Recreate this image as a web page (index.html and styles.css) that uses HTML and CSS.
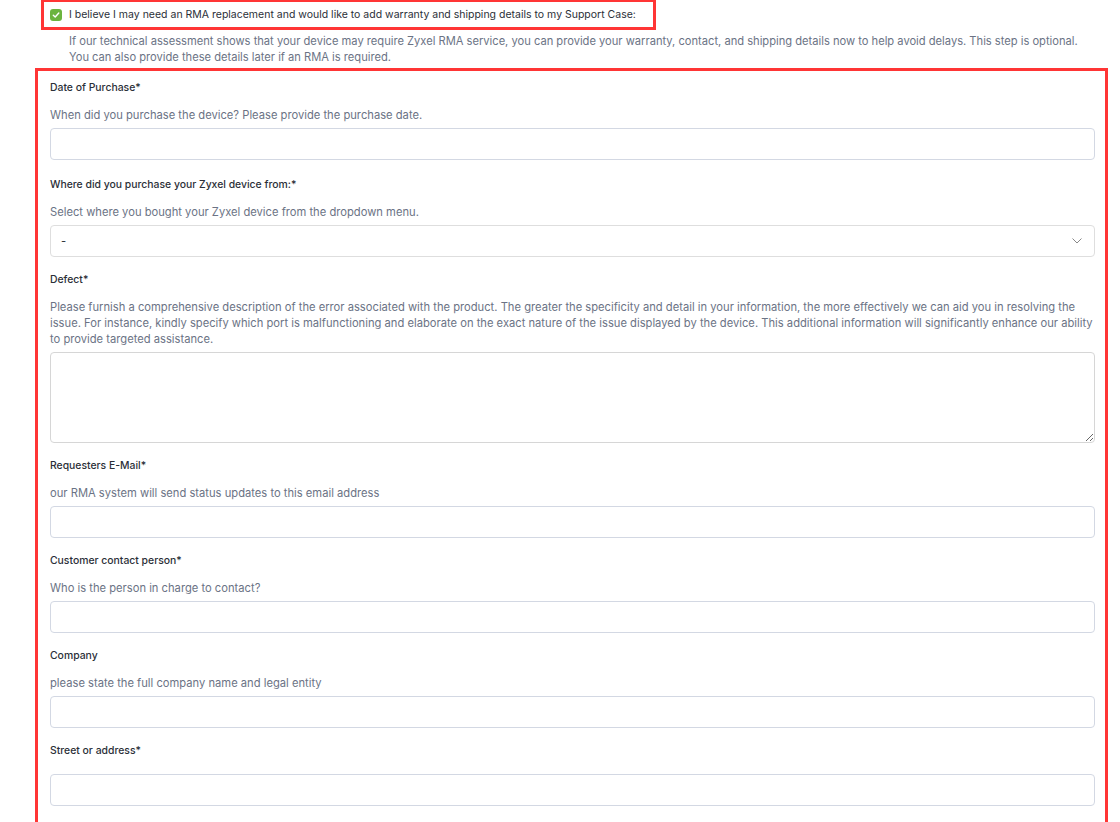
FILE: index.html
```html
<!DOCTYPE html>
<html lang="en">
<head>
    <meta charset="UTF-8">
    <meta name="viewport" content="width=device-width, initial-scale=1.0">
    <title>RMA details</title>
    <link rel="stylesheet" href="styles.css">
</head>
<body>
    <div class="rma-page">
        <label class="rma-opt">
            <span class="check">
                <svg width="8" height="8" viewBox="0 0 8 8"><path d="M1.3 4.2 L3.2 6 L6.8 2" fill="none" stroke="#fff" stroke-width="1.4" stroke-linecap="round" stroke-linejoin="round"/></svg>
            </span>
            I believe I may need an RMA replacement and would like to add warranty and shipping details to my Support Case:
        </label>
        <p class="rma-note">If our technical assessment shows that your device may require Zyxel RMA service, you can provide your warranty, contact, and shipping details now to help avoid delays. This step is optional. You can also provide these details later if an RMA is required.</p>

        <section class="rma-fields">
            <div class="field field-first">
                <label class="field-label" for="purchase-date">Date of Purchase*</label>
                <p class="field-help">When did you purchase the device? Please provide the purchase date.</p>
                <input class="field-input" type="text" id="purchase-date">
            </div>

            <div class="field">
                <label class="field-label" for="bought-from">Where did you purchase your Zyxel device from:*</label>
                <p class="field-help">Select where you bought your Zyxel device from the dropdown menu.</p>
                <div class="select-wrap">
                    <select class="field-input field-select" id="bought-from">
                        <option>-</option>
                    </select>
                    <svg class="chevron" width="10" height="6" viewBox="0 0 10 6"><path d="M0.5 0.5 L5 5 L9.5 0.5" fill="none" stroke="#888" stroke-width="1"/></svg>
                </div>
            </div>

            <div class="field">
                <label class="field-label" for="defect">Defect*</label>
                <p class="field-help">Please furnish a comprehensive description of the error associated with the product. The greater the specificity and detail in your information, the more effectively we can aid you in resolving the issue. For instance, kindly specify which port is malfunctioning and elaborate on the exact nature of the issue displayed by the device. This additional information will significantly enhance our ability to provide targeted assistance.</p>
                <textarea class="field-input field-area" id="defect"></textarea>
            </div>

            <div class="field">
                <label class="field-label" for="req-mail">Requesters E-Mail*</label>
                <p class="field-help">our RMA system will send status updates to this email address</p>
                <input class="field-input" type="email" id="req-mail">
            </div>

            <div class="field">
                <label class="field-label" for="contact">Customer contact person*</label>
                <p class="field-help">Who is the person in charge to contact?</p>
                <input class="field-input" type="text" id="contact">
            </div>

            <div class="field">
                <label class="field-label" for="company">Company</label>
                <p class="field-help">please state the full company name and legal entity</p>
                <input class="field-input" type="text" id="company">
            </div>

            <div class="field">
                <label class="field-label no-help" for="street">Street or address*</label>
                <input class="field-input" type="text" id="street">
            </div>
        </section>
    </div>
</body>
</html>
```

FILE: styles.css
```css
body {
    margin: 0;
    padding: 0;
    background-color: #fff;
    font-family: Inter, "Noto Sans", sans-serif;
    color: #2b2f38;
}

.rma-page {
    padding: 0 12px 0 35px;
}

.rma-opt {
    display: inline-flex;
    align-items: center;
    gap: 7px;
    margin: -1px 0 0 6px;
    width: 603px;
    height: 25px;
    padding: 0 0 0 6px;
    border: 3px solid #ff3535;
    font-size: 10.5px;
    color: #2b2f38;
    cursor: pointer;
}

.check {
    display: inline-flex;
    align-items: center;
    justify-content: center;
    width: 12px;
    height: 12px;
    border-radius: 3px;
    background-color: #6bb43f;
}

.rma-note {
    margin: 3px 0 0 34px;
    padding-right: 20px;
    font-size: 11.15px;
    line-height: 16px;
    color: #6b7385;
}

.rma-fields {
    margin-top: 3px;
    border: 3px solid #ff3535;
    border-bottom: none;
    padding: 9px 10px 24px 12px;
}

.field {
    margin-bottom: 15px;
}

.field-first {
    margin-bottom: 17px;
}

.field:last-child {
    margin-bottom: 0;
}

.field-label {
    display: block;
    font-size: 10.4px;
    font-weight: 500;
    line-height: 16px;
    color: #2b2f38;
    margin-bottom: 11px;
}

.field-label.no-help {
    margin-bottom: 15px;
}

.field-help {
    margin: 0 0 5px;
    font-size: 11.2px;
    line-height: 16px;
    color: #6b7385;
}

.field-input {
    display: block;
    width: 100%;
    height: 32px;
    box-sizing: border-box;
    border: 1px solid #d3d8e3;
    border-radius: 4px;
    background-color: #fff;
    font-family: inherit;
    font-size: 11.2px;
    padding: 0 10px;
    color: #2b2f38;
}

.select-wrap {
    position: relative;
}

.field-select {
    appearance: none;
    -webkit-appearance: none;
    border-color: #dedede;
}

.chevron {
    position: absolute;
    right: 13px;
    top: 13px;
}

.field-area {
    height: 91px;
    border-color: #d6d6d6;
    resize: vertical;
    padding: 8px 10px;
}
```
